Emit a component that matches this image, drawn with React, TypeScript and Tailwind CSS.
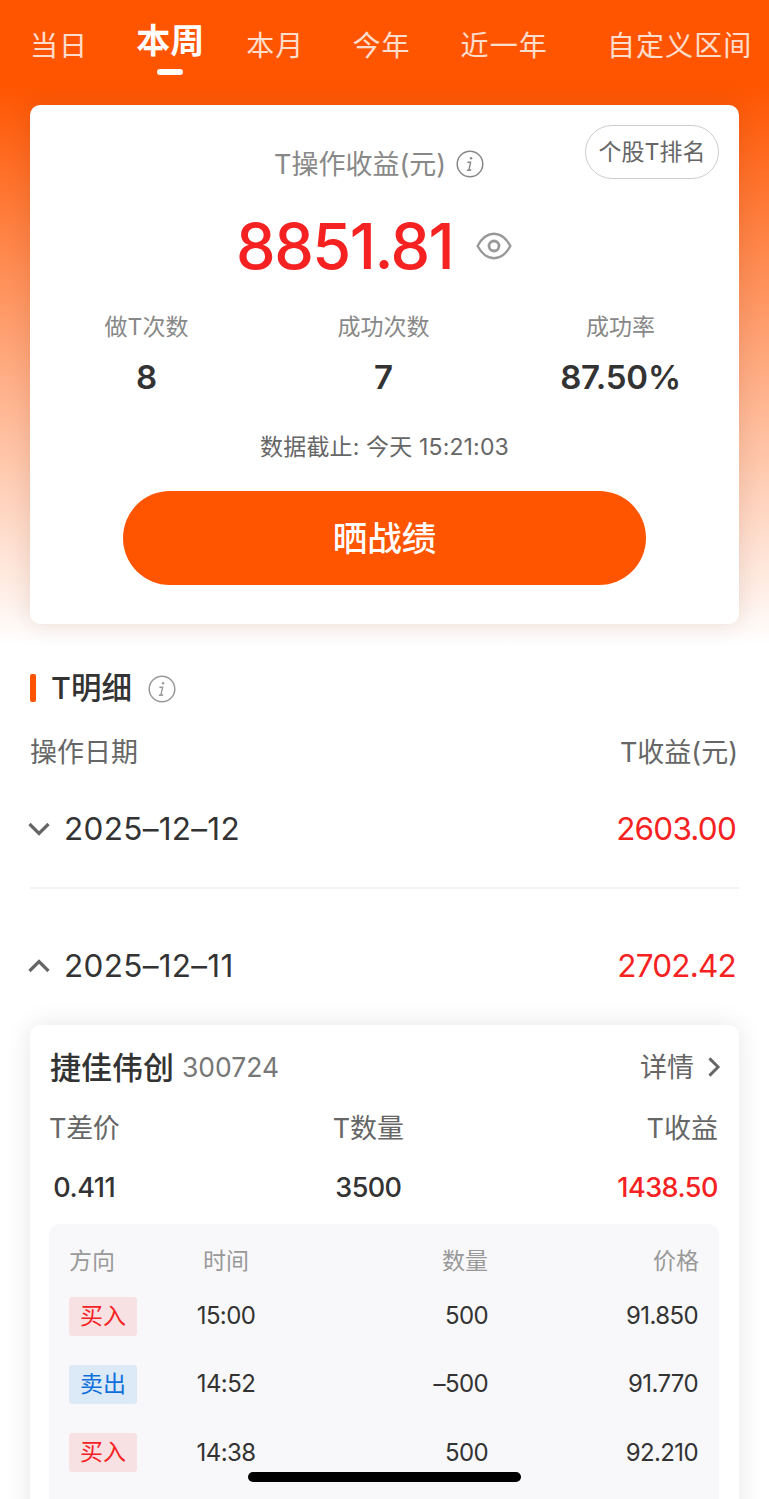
import React, { useState } from 'react';
import clsx from 'clsx';

interface Trade {
    side: 'buy' | 'sell';
    time: string;
    amount: string;
    price: string;
}

const TABS = [
    { label: '当日', className: 'ml-[30px]' },
    { label: '本周', className: 'ml-[48px]' },
    { label: '本月', className: 'ml-[42px]' },
    { label: '今年', className: 'ml-[48px]' },
    { label: '近一年', className: 'ml-[50px]' },
    { label: '自定义区间', className: 'ml-[59px]' },
];

const STATS = [
    { label: '做T次数', value: '8' },
    { label: '成功次数', value: '7' },
    { label: '成功率', value: '87.50%' },
];

const TRADES: Trade[] = [
    { side: 'buy', time: '15:00', amount: '500', price: '91.850' },
    { side: 'sell', time: '14:52', amount: '–500', price: '91.770' },
    { side: 'buy', time: '14:38', amount: '500', price: '92.210' },
];

const InfoIcon = ({ className }: { className?: string }) => (
    <svg viewBox="0 0 28 28" fill="none" className={clsx('w-7 h-7 shrink-0', className)}>
        <circle cx="14" cy="14" r="12.8" stroke="currentColor" strokeWidth="1.5" />
        <circle cx="15.1" cy="8.2" r="1.2" fill="currentColor" />
        <path d="M11.4 12.2h3.200l-1.600 7.400c-.1.700.2.900.8.700l1.500-.6M10.900 20.300h2.600" stroke="currentColor" strokeWidth="1.4" />
    </svg>
);

const EyeIcon = () => (
    <svg viewBox="0 0 36 28" fill="none" stroke="currentColor" strokeWidth="2.4" className="w-9 h-7 shrink-0 text-[#999]">
        <path d="M1.6 14C6 6 11.600 1.800 18 1.800S30 6 34.400 14C30 22 24.400 26.200 18 26.200S6 22 1.600 14Z" strokeLinejoin="round" />
        <circle cx="18" cy="14" r="5" strokeWidth="2.800" />
    </svg>
);

const Chevron = ({ className }: { className?: string }) => (
    <svg viewBox="0 0 22 14" fill="none" stroke="currentColor" strokeWidth="3.2" className={clsx('h-[14px] shrink-0 text-[#666]', className)}>
        <path d="M1.500 2 11 11.500 20.500 2" />
    </svg>
);

const DayRow = ({ date, profit, open }: { date: string; profit: string; open?: boolean }) => (
    <div className="flex items-center h-10">
        <Chevron className={clsx('w-[22px] -ml-0.5', open && 'rotate-180')} />
        <span className="ml-[14px] text-[31.500px] tracking-[0.300px] text-[#333]">{date}</span>
        <span className="ml-auto mr-[3px] text-[31.500px] tracking-[-0.800px] text-[#f62222]">{profit}</span>
    </div>
);

const TradeRow = ({ trade }: { trade: Trade }) => (
    <div className="grid grid-cols-[68px_178px_173px_1fr] items-center h-10 mb-[28.300px] text-[24px] tracking-[-0.600px] text-[#333]">
        <span
            className={clsx(
                'flex items-center justify-center h-[39px] rounded-[3px] text-[23px] tracking-normal',
                trade.side === 'buy' ? 'bg-[#f8e1e2] text-[#f62222]' : 'bg-[#dce9f7] text-[#0d6fdc]'
            )}
        >
            {trade.side === 'buy' ? '买入' : '卖出'}
        </span>
        <span className="text-center">{trade.time}</span>
        <span className="text-right">{trade.amount}</span>
        <span className="pr-px text-right">{trade.price}</span>
    </div>
);

export default function App() {
    const [active, setActive] = useState('本周');

    return (
        <div className="relative w-[769px] h-[1499px] overflow-hidden bg-white bg-[linear-gradient(180deg,#ff5500_85px,#ffffff_645px)] font-['Inter','Noto_Sans_CJK_SC',sans-serif] whitespace-nowrap leading-none">
            <nav className="flex h-[105px]">
                {TABS.map(tab => (
                    <button
                        key={tab.label}
                        type="button"
                        onClick={() => setActive(tab.label)}
                        className={clsx('flex flex-col items-center shrink-0', tab.className)}
                    >
                        {tab.label === active ? (
                            <>
                                <span className="mt-[21px] h-10 leading-10 text-[34px] font-semibold text-white">{tab.label}</span>
                                <span className="mt-[8px] w-[26px] h-[6px] rounded-full bg-white" />
                            </>
                        ) : (
                            <span className="mt-[26px] h-10 leading-10 text-[28px] tracking-[1.100px] text-white/80">{tab.label}</span>
                        )}
                    </button>
                ))}
            </nav>

            <section className="flex flex-col mx-[30px] w-[709px] h-[519px] rounded-[10px] bg-white shadow-[0_0_24px_rgba(80,30,10,0.13)]">
                <div className="grid grid-cols-[244px_1fr_154px] mt-5 pr-5">
                    <div className="col-start-2 flex items-center h-[40px] mt-[19px] text-[27px] text-[#888]">
                        T操作收益(元)
                        <InfoIcon className="ml-[10px]" />
                    </div>
                    <button type="button" className="justify-self-end flex items-center justify-center w-[134px] h-[54px] rounded-full border border-[#ccc] text-[23px] text-[#666]">
                        个股T排名
                    </button>
                </div>

                <div className="flex items-center ml-[206px] mt-[26px] h-[72px]">
                    <span className="w-[220px] text-[63px] font-[550] tracking-[-1.500px] text-[#f62222]">8851.81</span>
                    <span className="ml-5"><EyeIcon /></span>
                </div>

                <div className="grid grid-cols-3 -ml-0.5 mt-[29px]">
                    {STATS.map(stat => (
                        <div key={stat.label} className="flex flex-col items-center">
                            <span className="h-8 leading-8 text-[23px] text-[#888]">{stat.label}</span>
                            <span className="mt-[14px] h-10 leading-10 text-[33px] font-semibold tracking-[-0.200px] text-[#333]">{stat.value}</span>
                        </div>
                    ))}
                </div>

                <div className="mt-[34px] h-8 leading-8 text-center text-[23px] tracking-[0.150px] text-[#666]">数据截止: 今天 15:21:03</div>

                <button type="button" className="mt-[28px] pt-[3px] mx-auto w-[523px] h-[94px] shrink-0 rounded-full bg-[#ff5500] text-[34.500px] font-medium text-white">
                    晒战绩
                </button>
            </section>

            <section className="px-[30px]">
                <div className="flex items-center h-10 mt-[44px]">
                    <span className="w-[6px] h-[28px] rounded-[2px] bg-[#ff5500]" />
                    <h2 className="ml-[15px] text-[30.500px] font-medium text-[#333]">T明细</h2>
                    <InfoIcon className="ml-4 mt-px text-[#999]" />
                </div>
                <div className="flex items-center justify-between h-10 mt-[24px] text-[27px] text-[#666]">
                    <span>操作日期</span>
                    <span className="mr-px">T收益(元)</span>
                </div>
                <div className="mt-[37px] pb-[38px] border-b-2 border-[#f3f3f3]">
                    <DayRow date="2025–12–12" profit="2603.00" />
                </div>
                <div className="mt-[57px]">
                    <DayRow date="2025–12–11" profit="2702.42" open />
                </div>
            </section>

            <section className="mx-[30px] mt-[39px] h-[520px] px-5 rounded-[10px] bg-white shadow-[0_0_26px_rgba(0,0,0,0.1)]">
                <div className="flex items-center h-10 pt-[22px] box-content">
                    <span className="text-[31px] font-medium text-[#333]">捷佳伟创</span>
                    <span className="ml-2 text-[26.500px] text-[#777]">300724</span>
                    <span className="ml-auto text-[27px] text-[#666]">详情</span>
                    <Chevron className="ml-2.5 -mr-[5px] w-[20px] -rotate-90" />
                </div>
                <div className="flex justify-between -ml-px mr-px mt-[22px] text-[27px] text-[#666]">
                    <div className="flex flex-col items-center">
                        <span className="h-10 leading-10 tracking-[-0.300px]">T差价</span>
                        <span className="mt-[19px] h-10 leading-10 font-medium tracking-[-0.500px] text-[#333]">0.411</span>
                    </div>
                    <div className="flex flex-col items-center">
                        <span className="h-10 leading-10">T数量</span>
                        <span className="mt-[19px] h-10 leading-10 font-medium tracking-[-0.600px] text-[#333]">3500</span>
                    </div>
                    <div className="flex flex-col items-end">
                        <span className="h-10 leading-10">T收益</span>
                        <span className="mt-[19px] h-10 leading-10 font-medium tracking-[-0.500px] text-[#f62222]">1438.50</span>
                    </div>
                </div>

                <div className="mt-[16px] h-[300px] pt-[17px] px-5 -ml-px rounded-[11px] bg-[#f8f8fa]">
                    <div className="grid grid-cols-[68px_178px_173px_1fr] items-center h-10 mb-[15px] text-[23px] text-[#999]">
                        <span>方向</span>
                        <span className="text-center">时间</span>
                        <span className="text-right">数量</span>
                        <span className="text-right">价格</span>
                    </div>
                    {TRADES.map(trade => (
                        <TradeRow key={trade.time} trade={trade} />
                    ))}
                </div>
            </section>

            {/* home indicator */}
            <div className="absolute left-[248px] bottom-[17px] w-[273px] h-[10px] rounded-full bg-black" />
        </div>
    );
}
